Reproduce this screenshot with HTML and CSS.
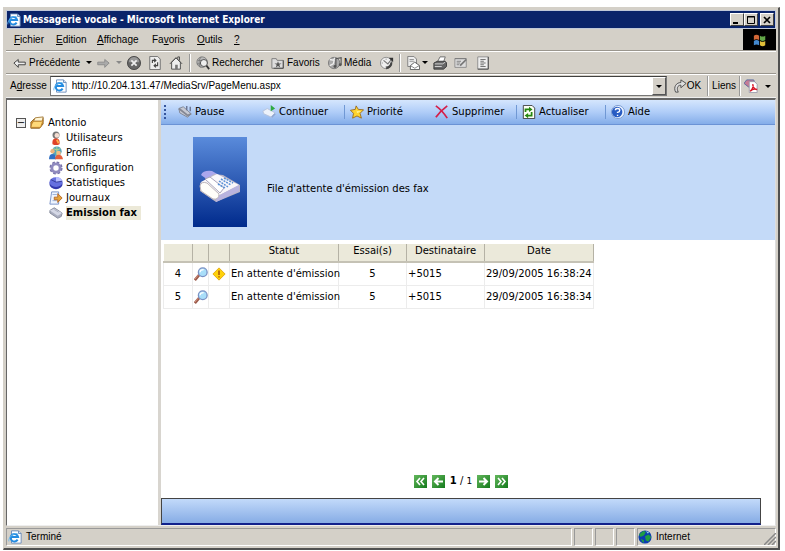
FILE: index.html
```html
<!DOCTYPE html>
<html lang="fr">
<head>
<meta charset="utf-8">
<title>Messagerie vocale</title>
<link rel="stylesheet" href="styles.css">
</head>
<body>
<svg class="defs" width="0" height="0" aria-hidden="true">
  <defs>
    <linearGradient id="tile" x2="0" y2="1"><stop stop-color="#5a8bdb"/><stop offset="1" stop-color="#002a8c"/></linearGradient>
    <linearGradient id="green" x2="1" y2="1"><stop stop-color="#63b75c"/><stop offset="1" stop-color="#147a1c"/></linearGradient>
    <symbol id="ie" viewBox="0 0 16 16"><path d="M4 1h8l3 3v11H4z" fill="#fff" stroke="#6688b8"/><path d="M12 1v3h3" fill="#cde" stroke="#6688b8"/><path d="M11 11a4.300 4.300 0 1 1 .5-3H4" fill="none" stroke="#248be0" stroke-width="2.300"/><path d="M1 13C0 10 5 3 11 4" fill="none" stroke="#63b7f0"/></symbol>
    <symbol id="back" viewBox="0 0 16 16"><path d="M1 8l5-4v3h8v3H6v3z" fill="#eee" stroke="#333"/></symbol>
    <symbol id="fwd" viewBox="0 0 16 16"><path d="M15 8l-5-4v3H2v3h8v3z" fill="#aaa" stroke="#888"/></symbol>
    <symbol id="stop" viewBox="0 0 16 16"><circle cx="8" cy="8" r="7.500" fill="#666" stroke="#444"/><path d="M2 7a6 6 0 0 1 12 0" fill="#999"/><path d="M5 5l6 6M11 5l-6 6" stroke="#eee" stroke-width="2"/></symbol>
    <symbol id="refresh" viewBox="0 0 16 16"><path d="M2 .5h9l3 3v12H2z" fill="#eee" stroke="#666"/><path d="M5 8V5h4M7 3l2 2-2 2M11 7v4H7M9 9l-2 2 2 2" fill="none" stroke="#444" stroke-width="1.300"/></symbol>
    <symbol id="home" viewBox="0 0 16 16"><path d="M3 7v8h10V7L8 2z" fill="#eee" stroke="#444"/><path d="M1 9l7-7 7 7M12 5V1h-2v2" fill="none" stroke="#444"/><path d="M7 10h3v5H7z" fill="#777"/></symbol>
    <symbol id="search" viewBox="0 0 16 16"><circle cx="7" cy="7" r="6" fill="#bbb" stroke="#777"/><path d="M2 5h8M1 9h6M6 1C3 4 3 9 5 13" stroke="#777" fill="none"/><circle cx="9" cy="8" r="4" fill="#eee" stroke="#444"/><path d="M12 11l3 4" stroke="#333" stroke-width="2"/></symbol>
    <symbol id="favs" viewBox="0 0 16 16"><path d="M1 3h5l1 2h7v9H1z" fill="#ddd" stroke="#777"/><path d="M14 5v9H3" fill="none" stroke="#444"/><path d="M8 6l1 2.500h3L9.500 10l1 3L8 11.500 5.500 13l1-3L4 8.500h3z" fill="#555"/></symbol>
    <symbol id="media" viewBox="0 0 16 16"><circle cx="7" cy="8" r="6.500" fill="#aaa" stroke="#777"/><path d="M2 4l5 1-1 4-4 2M8 2l-2 3" fill="none" stroke="#eee" stroke-width="1.500"/><path d="M9 12V3l6-1v8" fill="none" stroke="#555" stroke-width="1.300"/><circle cx="8" cy="12" r="1.700" fill="#555"/><circle cx="14" cy="10" r="1.700" fill="#555"/></symbol>
    <symbol id="history" viewBox="0 0 16 16"><circle cx="7" cy="8" r="6.500" fill="#f0f0f0" stroke="#888"/><path d="M14 7a7 7 0 0 1-7 8l0-3q4 0 5-5z" fill="#444"/><path d="M7 3v1M7 12v1M2 8h1M4 5l5 4 4-5" stroke="#777" fill="none" stroke-width="1.300"/><path d="M10 2l5 0v5z" fill="#333"/></symbol>
    <symbol id="mail" viewBox="0 0 16 16"><path d="M2 .5h7l3 3V12H2z" fill="#eee" stroke="#777"/><path d="M4 4h5M4 6h5" stroke="#888"/><path d="M5 11l5-4 5.500 4v4.500H5z" fill="#fff" stroke="#555"/><path d="M5 11l5 3 5-3" fill="none" stroke="#777"/></symbol>
    <symbol id="print" viewBox="0 0 16 16"><path d="M5 7l3-6h6l-2 6" fill="#fff" stroke="#666"/><path d="M1 8l4-2h9l1.500 2v4L12 15H1z" fill="#666" stroke="#333"/><path d="M2 9h9l3-2M2 12h8" stroke="#ddd" fill="none"/></symbol>
    <symbol id="edit" viewBox="0 0 16 16"><path d="M1 3h13v10H1z" fill="#ddd" stroke="#888"/><path d="M1 3h13M3 6h5M3 8h4M3 10h3" stroke="#777"/><path d="M7 11l7-7" stroke="#777" stroke-width="2"/></symbol>
    <symbol id="doc" viewBox="0 0 16 16"><path d="M2 1h12v14H2z" fill="#eee" stroke="#888"/><path d="M14 1v14H2" fill="none" stroke="#444"/><path d="M5 4h6M5 6h4M5 8h6M5 10h4M5 12h6" stroke="#666"/></symbol>
    <symbol id="go" viewBox="0 0 16 16"><path d="M3 15C0 9 4 4 9 4V1l6 4-6 5V7c-4 0-5 4-3 8z" fill="#ddd" stroke="#444"/></symbol>
    <symbol id="pdf" viewBox="0 0 16 16"><path d="M0 5l3-4h8l2 4-2 4H5z" fill="#c67b96" stroke="#56679d"/><path d="M6 3h6l3 3v9.500H6z" fill="#fff" stroke="#99a"/><path d="M7 14c3-2 4-6 3-8 0 3 2 6 5 6-3-1-6 0-8 2z" fill="none" stroke="#d81224" stroke-width="1.600"/></symbol>
    <symbol id="flag" viewBox="0 0 16 16"><path d="M1 3q3-2 6 0v5q-3-2-6 0z" fill="#d36736"/><path d="M8 3q3 2 6 0v5q-3 2-6 0z" fill="#63a848"/><path d="M1 9q3-2 6 0v5q-3-2-6 0z" fill="#4389cf"/><path d="M8 9q3 2 6 0v5q-3 2-6 0z" fill="#dfbe38"/></symbol>
    <symbol id="folders" viewBox="0 0 16 16"><path d="M1 7l4-4 10-1v7l-4 5H1z" fill="#d99a32" stroke="#8c6124"/><path d="M4 6l2-4 9-1-1 5z" fill="#fff6d6" stroke="#a57b3b"/><path d="M2 9l2-3h9l2-1-3 8H1z" fill="#ffd978" stroke="#b77b28"/></symbol>
    <symbol id="user" viewBox="0 0 16 16"><path d="M4 15q-1-6 4-7 5 1 4 7-4 2-8 0z" fill="#df4228"/><circle cx="8" cy="4.500" r="4" fill="#777"/><circle cx="9" cy="5" r="2.700" fill="#f3dcd0"/><path d="M9 10l2 4" stroke="#ffb04b" stroke-width="2"/></symbol>
    <symbol id="profiles" viewBox="0 0 16 16"><circle cx="9" cy="6" r="5.500" fill="#58a5bb"/><path d="M5 3q4 3 8 0M9 1v10" stroke="#bcdf87" fill="none"/><circle cx="4" cy="6" r="2.500" fill="#efb47d"/><path d="M0 15q0-6 4-6t4 6z" fill="#3270c3"/><circle cx="11" cy="8" r="2.500" fill="#f5bd84"/><path d="M7 15q0-5 4-5t5 5z" fill="#e65e3d"/></symbol>
    <symbol id="gear" viewBox="0 0 16 16"><circle cx="8" cy="8" r="6.500" fill="none" stroke="#7772a8" stroke-width="2" stroke-dasharray="3 2.100"/><circle cx="8" cy="8" r="4.700" fill="#fff" stroke="#8f8abf" stroke-width="3.200"/></symbol>
    <symbol id="pie" viewBox="0 0 16 16"><ellipse cx="8" cy="9" rx="7.500" ry="6" fill="#3338ac"/><ellipse cx="8" cy="7" rx="7.500" ry="5.500" fill="#6670df"/><path d="M8 7V1q6 0 7.500 5z" fill="#b6bdff"/><path d="M8 7L2 4M8 7l7-1" stroke="#303592"/></symbol>
    <symbol id="journal" viewBox="0 0 16 16"><path d="M3 1h8v14H1z" fill="#eef5ff" stroke="#718bc3"/><path d="M4 4h5M4 11h5" stroke="#94aad5"/><path d="M6 7h4V3l5 5-5 5v-3H6z" fill="#e5a43a" stroke="#b46221"/></symbol>
    <symbol id="faxmini" viewBox="0 0 16 16"><path d="M1 5l5-3 9 6-1 4-4 2-9-6z" fill="#a9adbf" stroke="#838899"/><path d="M1 5l5-2 9 5-5 3z" fill="#d5d8e6"/><path d="M6 4l5 3" stroke="#a5aabc"/></symbol>
    <symbol id="pause" viewBox="0 0 16 16"><path d="M1 4l5-2 9 8-4 4-9-5z" fill="#c7cad4" stroke="#7c8190"/><path d="M1 4l10 8 4-2" fill="none" stroke="#858894" stroke-width="2"/><path d="M10 1v5M14 2v5" stroke="#6b7592" stroke-width="1.600"/></symbol>
    <symbol id="resume" viewBox="0 0 16 16"><path d="M1 7l5-3 9 5-4 5-9-4z" fill="#edf2fb" stroke="#b6c1d9"/><path d="M11 14l4-4" stroke="#8fa6d3" stroke-width="2"/><path d="M10 0l5 4-5 3z" fill="#2eaa41"/></symbol>
    <symbol id="star" viewBox="0 0 16 16"><path d="M7 1l2.500 4 6 .5-4 4L13 15l-5-2.500L3 15l1-5.500L.5 6 6 5z" fill="#ffd42e" stroke="#996819"/><path d="M7 3l1 4 5 0-5 2z" fill="#fff5a0"/></symbol>
    <symbol id="cross" viewBox="0 0 16 16"><path d="M1 1q7 5 13 14M14 1Q6 7 1 14" fill="none" stroke="#d51e49" stroke-width="2"/></symbol>
    <symbol id="reload" viewBox="0 0 16 16"><path d="M1.500.500h10l3 3v12h-13z" fill="#fbfff4" stroke="#333"/><path d="M4 8V5h5M11 8v4H6" fill="none" stroke="#26870e" stroke-width="2"/><path d="M8 2l4 3-4 3zM7 9l-4 3 4 3z" fill="#26870e"/></symbol>
    <symbol id="help" viewBox="0 0 16 16"><circle cx="8" cy="8" r="7.500" fill="#eaf3ff" stroke="#7495cb"/><circle cx="7" cy="8" r="6" fill="#285cc3"/><path d="M5 6q0-2 2.500-2T10 6 7.500 8.500V9M7.500 11v1.500" fill="none" stroke="#fff" stroke-width="1.600"/></symbol>
    <symbol id="loupe" viewBox="0 0 16 16"><path d="M6 9l-5 6" stroke="#9b5b4b" stroke-width="3"/><path d="M5 9l-4 5" stroke="#d89380"/><circle cx="10" cy="6" r="5" fill="#a9def9" stroke="#7a91c4" stroke-width="1.500"/><path d="M7 6q0-3 4-3" fill="none" stroke="#fff" stroke-width="1.500"/></symbol>
    <symbol id="warn" viewBox="0 0 16 16"><path d="M8 1l7 7-7 7-7-7z" fill="#ffd20b" stroke="#e0a508"/><path d="M8 4v5M8 10.500V12" stroke="#a7510b" stroke-width="1.700"/></symbol>
    <symbol id="globe" viewBox="0 0 16 16"><circle cx="8" cy="8" r="7.500" fill="#0b3db0"/><path d="M1 5l5-4 3 1-2 4-4 2zM8 7l4-2 3 3-3 5-3-1zM3 10l4 2-1 3z" fill="#1f9d43"/><path d="M9 1l4 2-2 1z" fill="#9ddbe9"/></symbol>
    <symbol id="first" viewBox="0 0 13 13"><path d="M0 0h13v13H0z" fill="url(#green)"/><path d="M6 3L3 6.500 6 10M10 3L7 6.500 10 10" fill="none" stroke="#fff" stroke-width="1.600"/></symbol>
    <symbol id="prev" viewBox="0 0 13 13"><path d="M0 0h13v13H0z" fill="url(#green)"/><path d="M11 6.500H3M6.500 3L3 6.500 6.500 10" fill="none" stroke="#fff" stroke-width="2"/></symbol>
    <symbol id="next" viewBox="0 0 13 13"><path d="M0 0h13v13H0z" fill="url(#green)"/><path d="M2 6.500h8M6.500 3L10 6.500 6.500 10" fill="none" stroke="#fff" stroke-width="2"/></symbol>
    <symbol id="last" viewBox="0 0 13 13"><path d="M0 0h13v13H0z" fill="url(#green)"/><path d="M3 3l3 3.500L3 10M7 3l3 3.500L7 10" fill="none" stroke="#fff" stroke-width="1.600"/></symbol>
  </defs>
</svg>

<div class="window">
  <header class="titlebar">
    <svg class="icon"><use href="#ie"/></svg>
    <h1>Messagerie vocale - Microsoft Internet Explorer</h1>
    <div class="controls">
      <button aria-label="Réduire"><svg viewBox="0 0 10 10"><path d="M1 8h5" stroke="#000" stroke-width="2"/></svg></button>
      <button aria-label="Agrandir"><svg viewBox="0 0 10 10"><path d="M1.500 1.500h7v7h-7zM1 2h8" fill="none" stroke="#000"/></svg></button>
      <button class="close" aria-label="Fermer"><svg viewBox="0 0 10 10"><path d="M2 2l6 6M8 2L2 8" stroke="#000" stroke-width="1.700"/></svg></button>
    </div>
  </header>

  <nav class="menubar">
    <button><u>F</u>ichier</button>
    <button><u>E</u>dition</button>
    <button><u>A</u>ffichage</button>
    <button>Fa<u>v</u>oris</button>
    <button><u>O</u>utils</button>
    <button><u>?</u></button>
    <span class="brand"><svg class="icon"><use href="#flag"/></svg></span>
  </nav>

  <div class="toolbar">
    <button><svg class="icon"><use href="#back"/></svg>Précédente</button>
    <button class="caret" aria-label="Historique précédent"></button>
    <button aria-label="Suivante"><svg class="icon"><use href="#fwd"/></svg></button>
    <button class="caret dim" aria-label="Historique suivant"></button>
    <button aria-label="Arrêter"><svg class="icon"><use href="#stop"/></svg></button>
    <button aria-label="Actualiser la page"><svg class="icon"><use href="#refresh"/></svg></button>
    <button aria-label="Démarrage"><svg class="icon"><use href="#home"/></svg></button>
    <button class="ruled"><svg class="icon"><use href="#search"/></svg>Rechercher</button>
    <button><svg class="icon"><use href="#favs"/></svg>Favoris</button>
    <button><svg class="icon"><use href="#media"/></svg>Média</button>
    <button aria-label="Historique"><svg class="icon"><use href="#history"/></svg></button>
    <button class="ruled" aria-label="Courrier"><svg class="icon"><use href="#mail"/></svg><i class="arrow"></i></button>
    <button aria-label="Imprimer"><svg class="icon"><use href="#print"/></svg></button>
    <button aria-label="Modifier"><svg class="icon"><use href="#edit"/></svg></button>
    <button aria-label="Discussion"><svg class="icon"><use href="#doc"/></svg></button>
  </div>

  <form class="addressbar">
    <label for="url">A<u>d</u>resse</label>
    <div class="field">
      <svg class="icon"><use href="#ie"/></svg>
      <input id="url" type="text" value="http://10.204.131.47/MediaSrv/PageMenu.aspx">
      <button type="button" aria-label="Adresses récentes"><i class="arrow"></i></button>
    </div>
    <button type="button" class="go"><svg class="icon"><use href="#go"/></svg>OK</button>
    <button type="button" class="links">Liens</button>
    <button type="button" class="links" aria-label="PDF"><svg class="icon"><use href="#pdf"/></svg><i class="arrow"></i></button>
  </form>

  <div class="frames">
    <aside class="tree">
      <div class="root"><button aria-label="Replier">−</button><svg class="icon"><use href="#folders"/></svg><a href="#">Antonio</a></div>
      <ul>
        <li><svg class="icon"><use href="#user"/></svg><a href="#">Utilisateurs</a></li>
        <li><svg class="icon"><use href="#profiles"/></svg><a href="#">Profils</a></li>
        <li><svg class="icon"><use href="#gear"/></svg><a href="#">Configuration</a></li>
        <li><svg class="icon"><use href="#pie"/></svg><a href="#">Statistiques</a></li>
        <li><svg class="icon"><use href="#journal"/></svg><a href="#">Journaux</a></li>
        <li><svg class="icon"><use href="#faxmini"/></svg><a class="current" href="#">Emission fax</a></li>
      </ul>
    </aside>

    <main>
      <div class="actions">
        <i class="handle"></i>
        <button><svg class="icon"><use href="#pause"/></svg>Pause</button>
        <button><svg class="icon"><use href="#resume"/></svg>Continuer</button>
        <button class="split"><svg class="icon"><use href="#star"/></svg>Priorité</button>
        <button><svg class="icon"><use href="#cross"/></svg>Supprimer</button>
        <button class="split"><svg class="icon"><use href="#reload"/></svg>Actualiser</button>
        <button class="split"><svg class="icon"><use href="#help"/></svg>Aide</button>
      </div>

      <section class="banner">
        <svg class="tile" viewBox="0 0 54 90">
          <path d="M0 0h54v90H0z" fill="url(#tile)"/>
          <path d="M8 38q2-5 11-4l7 4-11 5z" fill="#aaa7ed"/>
          <path d="M7 46l14-9 9 1 17 10v7L23 65 7 54z" fill="#b9b5c7"/>
          <path d="M8 45l16-8 22 11-23 12z" fill="#f8f6fa"/>
          <path d="M23 60l23-12v6L23 65z" fill="#b8b3df"/>
          <path d="M7 49q1-5 7-3l12 11q0 6-6 5L8 54z" fill="#fffefa" stroke="#bcb5b9"/>
          <path d="M12 42l5-2 14 11-4 5z" fill="#fff" stroke="#aaa5ba"/>
          <path d="M28 42l10 6M31 41l9 5M26 44l9 6M25 47l7 4" stroke="#5b91d6" stroke-width="1.500" stroke-dasharray="2 1"/>
        </svg>
        <h2>File d'attente d'émission des fax</h2>
      </section>

      <table>
        <colgroup><col class="c-num"><col class="c-view"><col class="c-flag"><col class="c-status"><col class="c-try"><col class="c-dest"><col class="c-date"></colgroup>
        <thead><tr><th></th><th></th><th></th><th>Statut</th><th>Essai(s)</th><th>Destinataire</th><th>Date</th></tr></thead>
        <tbody>
          <tr><td class="mid">4</td><td><svg class="icon"><use href="#loupe"/></svg></td><td class="mid"><svg class="icon"><use href="#warn"/></svg></td><td>En attente d'émission</td><td class="mid">5</td><td>+5015</td><td>29/09/2005 16:38:24</td></tr>
          <tr><td class="mid">5</td><td><svg class="icon"><use href="#loupe"/></svg></td><td></td><td>En attente d'émission</td><td class="mid">5</td><td>+5015</td><td>29/09/2005 16:38:34</td></tr>
        </tbody>
      </table>

      <nav class="pager">
        <button aria-label="Première page"><svg><use href="#first"/></svg></button>
        <button aria-label="Page précédente"><svg><use href="#prev"/></svg></button>
        <span><b>1</b> / <small>1</small></span>
        <button aria-label="Page suivante"><svg><use href="#next"/></svg></button>
        <button aria-label="Dernière page"><svg><use href="#last"/></svg></button>
      </nav>
      <div class="footbar"></div>
    </main>
  </div>

  <footer class="statusbar">
    <div class="message"><svg class="icon"><use href="#ie"/></svg>Terminé</div>
    <div></div><div></div><div></div>
    <div class="zone"><svg class="icon"><use href="#globe"/></svg>Internet</div>
    <svg class="grip" viewBox="0 0 12 12"><path d="M0 12L12 0M4 12l8-8M8 12l4-4" stroke="#888" stroke-width="1.500"/></svg>
  </footer>
</div>
</body>
</html>
```
FILE: styles.css
```css
* { box-sizing: border-box; }

body {
  margin: 0;
  height: 100vh;
  padding: 7px 5px 1px 3px;
  background: #fff;
  color: #000;
  font: 10px/14px "DejaVu Sans", Verdana, sans-serif;
}

.defs { position: absolute; }

button {
  display: flex;
  align-items: center;
  padding: 0;
  border: 0;
  background: none;
  color: inherit;
  font: inherit;
  white-space: nowrap;
}

a { color: inherit; text-decoration: none; }
.icon { flex: none; width: 14px; height: 14px; }

.arrow, .caret::before {
  content: "";
  border: 3px solid transparent;
  border-top-color: #000;
  border-bottom: 0;
}
.dim::before { border-top-color: #888; }

/* Window frame */
.window {
  display: flex;
  flex-direction: column;
  height: 100%;
  padding: 2px;
  border: 1px solid #d4d0c8;
  border-right: 2px solid #505050;
  border-bottom: 2px solid #505050;
  background: #d4d0c8;
}

.titlebar {
  display: flex;
  align-items: center;
  gap: 2px;
  height: 19px;
  padding: 0 1px 0 0;
  border: 1px solid #c0c8d8;
  background: #0a246a;
  color: #fff;
}
.titlebar h1 {
  flex: 1;
  margin: 0;
  font: bold 10px/14px "DejaVu Sans Condensed", Tahoma, sans-serif;
}
.controls { display: flex; }
.controls button {
  justify-content: center;
  width: 14px;
  height: 13px;
  border: 1px solid #fff;
  border-right-color: #404040;
  border-bottom-color: #404040;
  background: #d4d0c8;
}
.controls .close { margin-left: 2px; }
.controls svg { width: 10px; height: 10px; }

.menubar, .toolbar, .addressbar, .statusbar {
  flex: none;
  font: 10px/14px "Liberation Sans", Tahoma, sans-serif;
}

.menubar {
  display: grid;
  grid-template-columns: 42px 41px 55px 45px 37px 1fr auto;
  align-items: center;
  height: 22px;
  padding-left: 8px;
  border-bottom: 1px solid #9a968e;
}
.brand {
  display: flex;
  align-items: center;
  justify-content: center;
  align-self: stretch;
  width: 33px;
  background: #000;
}

.toolbar {
  display: grid;
  grid-template-columns: 73px 10px 20px 11px 21px 21px 20px 82px 57px 52px 19px 34px 21px 22px 14px;
  align-items: center;
  height: 23px;
  padding-left: 7px;
  border-top: 1px solid #fff;
  border-bottom: 1px solid #9a968e;
}
.toolbar button { gap: 2px; }
.ruled {
  height: 18px;
  padding-left: 6px;
  border-left: 1px solid #999;
  box-shadow: inset 1px 0 #fff;
}

.addressbar {
  display: flex;
  align-items: center;
  gap: 3px;
  height: 24px;
  margin: 0;
  padding: 0 5px 0 4px;
  border-top: 1px solid #fff;
  border-bottom: 1px solid #eee;
}
.field {
  display: flex;
  flex: 1;
  align-items: center;
  height: 20px;
  padding-left: 2px;
  border: 1px solid #777;
  border-top-color: #404040;
  background: #fff;
}
.field input {
  flex: 1;
  min-width: 0;
  padding: 0 5px;
  border: 0;
  outline: 0;
  background: none;
  font: inherit;
}
.field button {
  justify-content: center;
  width: 14px;
  height: 18px;
  border: 1px solid #fff;
  border-right-color: #555;
  border-bottom-color: #555;
  background: #d4d0c8;
}
.go { padding: 0 3px; }
.links {
  gap: 7px;
  height: 20px;
  padding-left: 4px;
  border-left: 1px solid #999;
  box-shadow: inset 1px 0 #fff;
}

/* Page frames */
.frames {
  display: flex;
  flex: 1;
  min-height: 0;
  border: 1px solid #666;
  border-top-width: 2px;
  border-right-color: #ddd;
  border-bottom-color: #eee;
  background: #fff;
}
.tree {
  width: 154px;
  padding: 16px 0 0 9px;
  border-right: 3px solid #d8d5cf;
}
.root { display: flex; align-items: center; gap: 4px; }
.root button {
  justify-content: center;
  width: 10px;
  height: 10px;
  border: 1px solid #555;
  background: #eee;
  line-height: 8px;
}
.tree ul { margin: 0; padding: 0 0 0 33px; list-style: none; }
.tree li { display: flex; align-items: center; gap: 3px; height: 15px; }
.current { padding-right: 4px; background: #ece9d8; font-weight: bold; }

main { display: flex; flex: 1; flex-direction: column; min-width: 0; }

.actions {
  display: grid;
  grid-template-columns: 17px 84px 82px 91px 81px 89px auto;
  align-items: center;
  flex: none;
  height: 25px;
  border-bottom: 1px solid #6b93d5;
  background: linear-gradient(#d5e6fd, #b0cdf8 50%, #84ade9);
}
.handle { height: 14px; margin-left: 3px; border-left: 2px dotted #35559c; }
.actions button { gap: 3px; }
.actions .split { height: 14px; padding-left: 5px; border-left: 1px solid #7098d4; }

.banner {
  display: flex;
  flex: none;
  align-items: center;
  gap: 20px;
  height: 115px;
  padding: 0 32px 1px;
  background: #c4daf8;
}
.tile { width: 54px; height: 90px; }
.banner h2 { margin: 0; padding-top: 14px; font: inherit; }

table {
  width: 430px;
  margin: 4px 0 0 2px;
  border-collapse: collapse;
  table-layout: fixed;
}
.c-num { width: 29px; }
.c-view { width: 16px; }
.c-flag { width: 21px; }
.c-status { width: 109px; }
.c-try { width: 68px; }
.c-dest { width: 78px; }
.c-date { width: 109px; }
th {
  height: 18px;
  padding: 0 0 3px;
  border-right: 1px solid #b5b2a5;
  border-bottom: 2px solid #c5c2b5;
  background: #ebe9da;
  font-weight: normal;
}
td {
  height: 23px;
  padding: 0 0 0 1px;
  border: 1px solid #ececec;
  white-space: nowrap;
}
td .icon { display: block; }
.mid { padding: 0; text-align: center; }
.mid .icon { margin: auto; }

.pager {
  display: flex;
  align-items: center;
  gap: 5px;
  justify-content: center;
  margin: auto 14px 10px 0;
}
.pager svg { width: 13px; height: 13px; }
.pager small { font-size: 9px; }

.footbar {
  flex: none;
  height: 27px;
  margin-right: 14px;
  border: 1px solid #444;
  border-bottom: 2px solid #10208c;
  background: linear-gradient(#c2dafa, #86ace5);
}

.statusbar {
  display: grid;
  grid-template-columns: 1fr 19px 19px 19px 139px;
  gap: 2px;
  height: 20px;
  padding-top: 2px;
  position: relative;
}
.statusbar div {
  display: flex;
  align-items: center;
  gap: 4px;
  border: 1px solid #999;
  border-right-color: #fff;
  border-bottom-color: #fff;
}
.statusbar .message { padding-left: 1px; }
.grip { position: absolute; right: 0; bottom: 1px; width: 12px; height: 12px; }
```
